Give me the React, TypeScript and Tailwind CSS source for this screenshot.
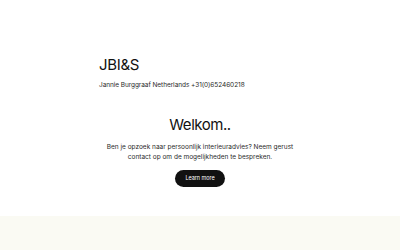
import React from 'react';

const App: React.FC = () => {
  return (
    <div className="min-h-[250px] w-full bg-white text-[#111] flex flex-col" style={{ fontFamily: 'Inter, "Noto Sans", sans-serif' }}>
      <header className="w-[202px] mx-auto pt-[57px]">
        <h1 className="text-[15px] leading-[16px] font-normal tracking-[-0.02em]">JBI&amp;S</h1>
        <p className="mt-[8px] text-[6.5px] leading-[9px] text-[#2a2a2a] tracking-[-0.01em]">
          Jannie Burggraaf Netherlands +31(0)652460218
        </p>
      </header>

      <main className="flex flex-col items-center mt-[26px]">
        <h2 className="text-[15px] leading-[17px] font-normal tracking-[-0.03em]">Welkom..</h2>
        <p className="mt-[9px] text-[6.5px] leading-[10px] text-center text-[#2a2a2a] w-[200px]">
          Ben je opzoek naar persoonlijk interieuradvies? Neem gerust contact op om de mogelijkheden te bespreken.
        </p>
        <button className="mt-[8px] w-[50px] h-[17px] rounded-full bg-[#111] text-white text-[5.5px] tracking-[-0.01em]">
          Learn more
        </button>
      </main>

      <div className="flex-1" />
      <footer className="h-[34px] bg-[#fafaf3] mt-[28px]" />
    </div>
  );
};

export default App;
